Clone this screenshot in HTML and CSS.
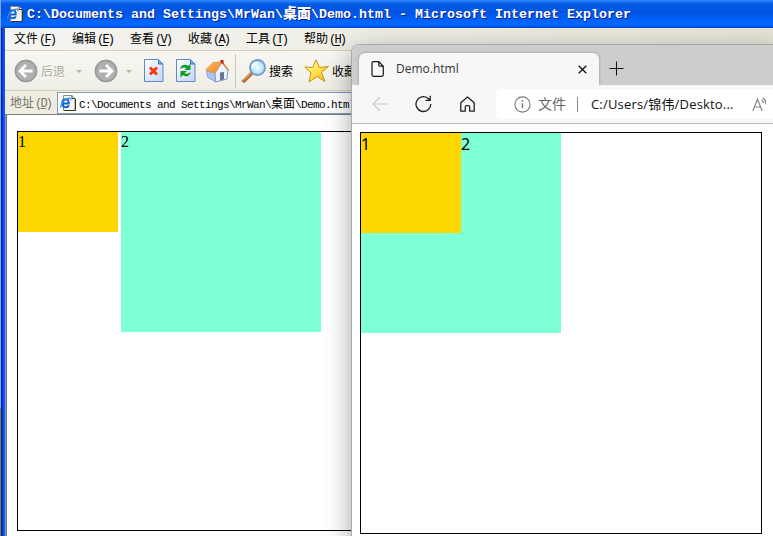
FILE: index.html
```html
<!DOCTYPE html>
<html lang="zh-CN">
<head>
<meta charset="utf-8">
<title>Demo.html</title>
<link rel="stylesheet" href="styles.css">
</head>
<body>
<svg class="defs" width="0" height="0">
  <defs>
    <radialGradient id="disc"><stop offset="0" stop-color="#aaa"/><stop offset=".75" stop-color="#b2b2b2"/><stop offset="1" stop-color="#989898"/></radialGradient>
    <linearGradient id="sheet" x2="1" y2="1"><stop offset="0" stop-color="#fff"/><stop offset="1" stop-color="#c3d3fa"/></linearGradient>
    <linearGradient id="gold" x2="1" y2="1"><stop offset="0" stop-color="#fffbc0"/><stop offset=".5" stop-color="#ffe34a"/><stop offset="1" stop-color="#efa90b"/></linearGradient>
    <linearGradient id="roof" x2="1" y2="1"><stop offset="0" stop-color="#ffc46a"/><stop offset="1" stop-color="#e77b20"/></linearGradient>
    <radialGradient id="lens"><stop offset="0" stop-color="#f4fdff"/><stop offset="1" stop-color="#a9dcf8"/></radialGradient>
    <symbol id="iepage" viewBox="0 0 16 16">
      <path d="M3.500.500h8.500l3 3v12H3.500z" fill="#f7f6ef" stroke="#8d8c80"/>
      <path d="M12 .500v3h3" fill="#fff" stroke="#333"/>
      <path d="M15.500 4v11.500H4" fill="none" stroke="#333"/>
      <path d="M2.500 8.500h6.200C8.900 5.200 7.600 4.300 5.900 4.300 3.700 4.300 2.300 6 2.300 8.300s1.500 3.900 3.500 3.900c1.500 0 2.500-.700 3-1.900" fill="none" stroke="#0f62d6" stroke-width="2"/>
      <path d="M1.300 12.800C-1 10.500 5.500 2.300 10.300 3.200q.9.300.4 1.800" fill="none" stroke="#3593f0" stroke-width="1.200"/>
    </symbol>
  </defs>
</svg>
<div class="desktop">
  <section class="ie">
    <header class="titlebar">
      <svg width="16" height="16"><use href="#iepage"/></svg>
      <span class="title">C:\Documents and Settings\MrWan\<b class="cjk">桌面</b>\Demo.html - Microsoft Internet Explorer</span>
    </header>
    <nav class="menu">
      <span>文件<i>(<u>F</u>)</i></span><span>编辑<i>(<u>E</u>)</i></span><span>查看<i>(<u>V</u>)</i></span><span>收藏<i>(<u>A</u>)</i></span><span>工具<i>(<u>T</u>)</i></span><span>帮助<i>(<u>H</u>)</i></span>
    </nav>
    <div class="tools">
      <svg class="round" width="24" height="24" viewBox="0 0 24 24"><circle cx="12" cy="12" r="11" fill="url(#disc)" stroke="#999"/><path d="M18.500 12H6.500M12 6l-6 6 6 6" fill="none" stroke="#fff" stroke-width="2.800"/></svg>
      <span class="back">后退</span>
      <svg class="caret" width="6" height="3"><path d="M0 0h6L3 3z" fill="#b9b7aa"/></svg>
      <svg class="forward" width="24" height="24" viewBox="0 0 24 24"><circle cx="12" cy="12" r="11" fill="url(#disc)" stroke="#999"/><path d="M5.500 12h12M12 6l6 6-6 6" fill="none" stroke="#fff" stroke-width="2.800"/></svg>
      <svg class="caret2" width="6" height="3"><path d="M0 0h6L3 3z" fill="#b9b7aa"/></svg>
      <svg class="stop" width="20" height="24" viewBox="0 0 20 24"><path d="M.5.500h14l4.500 4.500v17.500H.500z" fill="url(#sheet)" stroke="#6286cc"/><path d="M14.500.500V5H19" fill="#7ca5e4" stroke="#4675b8"/><path d="M6 8.500l7 7M13 8.500l-7 7" stroke="#f23b11" stroke-width="3"/></svg>
      <svg class="refresh" width="20" height="24" viewBox="0 0 20 24"><path d="M.5.500h14l4.500 4.500v17.500H.500z" fill="url(#sheet)" stroke="#6286cc"/><path d="M14.500.500V5H19" fill="#7ca5e4" stroke="#4675b8"/><path d="M4 10c1-4 5-5.500 8-3L14.500 5v6H8.500l2-2C8.500 8 6 8.500 4 10zM15 13c-1 4-5 5.500-8 3L4.500 18.500v-6.500h6.500l-2.500 2.200c2 1 4.500.500 6.500-1.200z" fill="#0a9c1d"/></svg>
      <svg class="house" width="24" height="24" viewBox="0 0 24 24"><path d="M1.500 12l9 2v9l-8-5z" fill="#a9c6f0" stroke="#86a3d1"/><path d="M10 13.500L17 3.500l6 7.500-1 9-11.500 3z" fill="#e9f2ff" stroke="#7f9bc9"/><path d="M.7 11L8 3.500l9-.5-7 11z" fill="url(#roof)" stroke="#e09a4c"/><path d="M17 3l6.500 8.500" fill="none" stroke="#dc8b47" stroke-width="1.500"/><path d="M15.500 1h3v4.500l-3-2z" fill="#bd2612"/><path d="M15 13.500l4-.500v7.500l-4 1z" fill="#6b7697"/></svg>
      <div class="split"></div>
      <svg class="glass" width="24" height="24" viewBox="0 0 24 24"><path d="M2 22l8-8" stroke="#ba7138" stroke-width="3.800" stroke-linecap="round"/><path d="M2 21l7-7" stroke="#eeb278"/><circle cx="15.500" cy="8.500" r="7.500" fill="url(#lens)" stroke="#779bcc" stroke-width="1.800"/><path d="M10.500 9c0-3 2-5 5-5" fill="none" stroke="#fff" stroke-width="2"/></svg>
      <span class="find">搜索</span>
      <svg class="star" width="25" height="24" viewBox="0 0 25 24"><path d="M12 1l3.500 7.500 9-1-7 6 3.500 9-8-5-8 5.500 2-9L.8 8l8 .500z" fill="url(#gold)" stroke="#c49412"/></svg>
      <span class="fav">收藏夹</span>
    </div>
    <div class="address">
      <span class="label">地址<i>(<u>D</u>)</i></span>
      <div class="field"><svg width="16" height="16"><use href="#iepage"/></svg><span>C:\Documents and Settings\MrWan\<b class="cjk">桌面</b>\Demo.html</span></div>
    </div>
    <main class="page">
      <div class="frame"><div class="one">1</div><div class="two">2</div></div>
    </main>
  </section>

  <section class="edge">
    <header class="tabs">
      <div class="tab">
        <svg width="14" height="16" viewBox="0 0 14 16"><path d="M2.500.700h5.300l4.500 4.500v8.600q0 1.500-1.500 1.500H2.500Q1 15.300 1 13.800V2.200Q1 .7 2.500.7zM7.800.700V4q0 1.200 1.200 1.200h3.300" fill="none" stroke="#111" stroke-width="1.200"/></svg>
        <span>Demo.html</span>
        <svg width="9" height="9"><path d="M.7.700l7.600 7.600M8.300.700L.7 8.300" stroke="#111" stroke-width="1.300"/></svg>
      </div>
      <svg class="plus" width="15" height="15"><path d="M7.500.500v14M.5 7.500h14" stroke="#111"/></svg>
    </header>
    <div class="bar">
      <svg class="arrow" width="17" height="16" viewBox="0 0 17 16"><path d="M16.500 8H1M8 1L1 8l7 7" fill="none" stroke="#c9c9c9" stroke-width="1.100"/></svg>
      <svg class="reload" width="17" height="18" viewBox="0 0 17 18"><path d="M15.800 9A7.400 7.400 0 1 1 13 3.300l1.500 1.500M15.200.800v4.500H10.500" fill="none" stroke="#222" stroke-width="1.300"/></svg>
      <svg class="home" width="15" height="16" viewBox="0 0 15 16"><path d="M.8 6.700L7.500.9l6.700 5.800v8.500H9.700v-4q0-1.500-1.200-1.500h-2q-1.200 0-1.200 1.500v4H.800z" fill="none" stroke="#222" stroke-width="1.300" stroke-linejoin="round"/></svg>
      <div class="omnibox">
        <svg class="info" width="17" height="17" viewBox="0 0 17 17"><circle cx="8.500" cy="8.500" r="7.600" fill="none" stroke="#777" stroke-width="1.100"/><path d="M8.500 4v1.700M8.500 7.300v5" stroke="#777" stroke-width="1.400"/></svg>
        <span class="scheme">文件</span><i class="rule"></i><span class="url">C:/Users/锦伟/Deskto...</span>
        <svg class="read" width="17" height="15" viewBox="0 0 17 15"><path d="M.8 14L5.500 2.200 10.200 14M2.500 10h6M9.500 3q2 1 1.800 3M10.500.700q3.500 2 3 6" fill="none" stroke="#888" stroke-width="1.200"/></svg>
      </div>
    </div>
    <main class="page"><div class="frame"><div class="two"><div class="one">1</div><span>2</span></div></div></main>
  </section>
</div>
</body>
</html>
```
FILE: styles.css
```css
* { box-sizing: border-box; }
body { margin: 0; overflow: hidden; font-family: "Liberation Sans", "Noto Sans CJK SC", sans-serif; }
.defs { position: absolute; }
svg { flex: none; display: block; }
i, .cjk { font-style: normal; }
.desktop { position: relative; width: 773px; height: 536px; overflow: hidden; background: linear-gradient(#78a7ef 0 408px, #6e8b13 409px); }
.ie { margin-left: 1px; width: 772px; height: 536px; padding-left: 4px; background: linear-gradient(90deg, #001ebd, #003be0 2px, #2268ef 3px, #0048e7 4px, #ece9d8 5px); }
.titlebar { height: 28px; margin-left: -4px; padding: 0 0 1px 6px; display: flex; align-items: center; gap: 4px; background: linear-gradient(#2d8cff 0, #0458e5 4px, #0054e3 13px, #0062fa 20px, #0369ff 25px, #0044cf 28px); }
.title { padding-top: 3px; white-space: pre; color: #fff; font: bold 13.333px/20px "Liberation Mono", "Noto Sans CJK SC", monospace; text-shadow: 1px 1px #0b1e8c; }
.title .cjk { font-size: 14px; line-height: 18px; }
.menu { height: 23px; padding: 0 0 3px 9px; display: flex; align-items: center; font: 12px "Noto Sans CJK SC", sans-serif; color: #000; background: linear-gradient(90deg, #f4f4f1, #efeee6 330px, #e5e3d5); border-bottom: 1px solid #d4cfb8; }
.menu span { width: 58px; white-space: nowrap; }
.menu i, .label i { margin-left: 1px; font: 12px "Liberation Mono", monospace; letter-spacing: -1.800px; }
.menu u { text-underline-offset: 2px; }
.tools { height: 40px; padding: 1px 0 0 9px; display: flex; align-items: center; border-bottom: 1px solid #d4cfb8; background: linear-gradient(#f7f6f1, #efeee6); font: 12px "Noto Sans CJK SC", sans-serif; white-space: nowrap; }
.tools span { padding-bottom: 2px; }
.back { width: 25px; margin-left: 3px; color: #aaa89a; text-shadow: 1px 1px #fff; }
.caret { margin-left: 10px; }
.forward { margin-left: 12px; }
.caret2 { margin-left: 8px; }
.stop { margin-left: 12px; }
.refresh { margin-left: 12px; }
.house { margin-left: 9px; }
.split { width: 1px; height: 34px; margin: 0 6px 0 6px; background: #cbc8b8; }
.find { margin-left: 3px; }
.star { margin-left: 11px; }
.fav { margin-left: 3px; }
.address { height: 24px; padding-left: 5px; display: flex; align-items: center; background: #efede2; border-bottom: 1px solid #828177; }
.label { width: 47px; padding-bottom: 2px; color: #77756a; font: 12px "Noto Sans CJK SC", sans-serif; white-space: nowrap; }
.field { flex: 1; height: 22px; padding-left: 2px; display: flex; align-items: center; gap: 3px; border: 1px solid #7f9db9; background: #fff; white-space: pre; font: 11px "Liberation Mono", monospace; letter-spacing: -.6px; }
.field .cjk { font: 12px "Noto Sans CJK SC", sans-serif; letter-spacing: 0; }
.ie .page { height: 421px; margin-left: 1px; padding: 16px 0 0 10px; border-left: 1px solid #77756a; background: #fff; }
.frame { border: 1px solid #000; }
.one { width: 100px; height: 100px; background: gold; }
.two { width: 200px; height: 200px; background: #7fffd4; }
.ie .frame { width: 402px; height: 400px; display: flex; gap: 3px; font: 16px/20px "Liberation Serif", serif; }
.edge { position: absolute; left: 351px; top: 44px; width: 430px; height: 510px; border: 1px solid #aaa; border-radius: 8px 0 0; overflow: hidden; background: #fff; box-shadow: 0 8px 26px rgba(0,0,0,.36); }
.tabs { height: 40px; padding: 8px 0 0 7px; display: flex; background: #cdcdcd; }
.tab { width: 240px; height: 32px; padding: 0 12px 0 12px; display: flex; align-items: center; gap: 11px; background: #f7f7f7; border-radius: 6px 6px 0 0; font: 12px "Open Sans", sans-serif; color: #333; box-shadow: 0 0 3px rgba(0,0,0,.3); }
.tab span { flex: 1; padding-bottom: 1px; }
.plus { margin: 8px 0 0 10px; }
.bar { position: relative; height: 39px; padding-left: 20px; display: flex; align-items: center; background: #f7f7f7; border-bottom: 1px solid #bdbdbd; }
.reload { margin-left: 26px; }
.home { margin-left: 28px; }
.omnibox { height: 30px; margin-left: 21px; padding-left: 18px; flex: 1; display: flex; align-items: center; border-radius: 5px; background: #fff; font: 14px "Noto Sans CJK SC", sans-serif; white-space: nowrap; }
.scheme { width: 28px; margin-left: 7px; padding-bottom: 2px; color: #666; }
.rule { width: 1px; height: 15px; margin: 0 13px 0 11px; background: #888; }
.url { width: 144px; padding-bottom: 2px; color: #111; font: 13px "Open Sans", "Noto Sans CJK SC", sans-serif; letter-spacing: .18px; }
.read { margin-left: 17px; }
.edge .page { padding: 8px; }
.edge .frame { width: 402px; height: 402px; font: 16px/22px "Noto Sans", sans-serif; }
.edge .two { display: flex; }
```
